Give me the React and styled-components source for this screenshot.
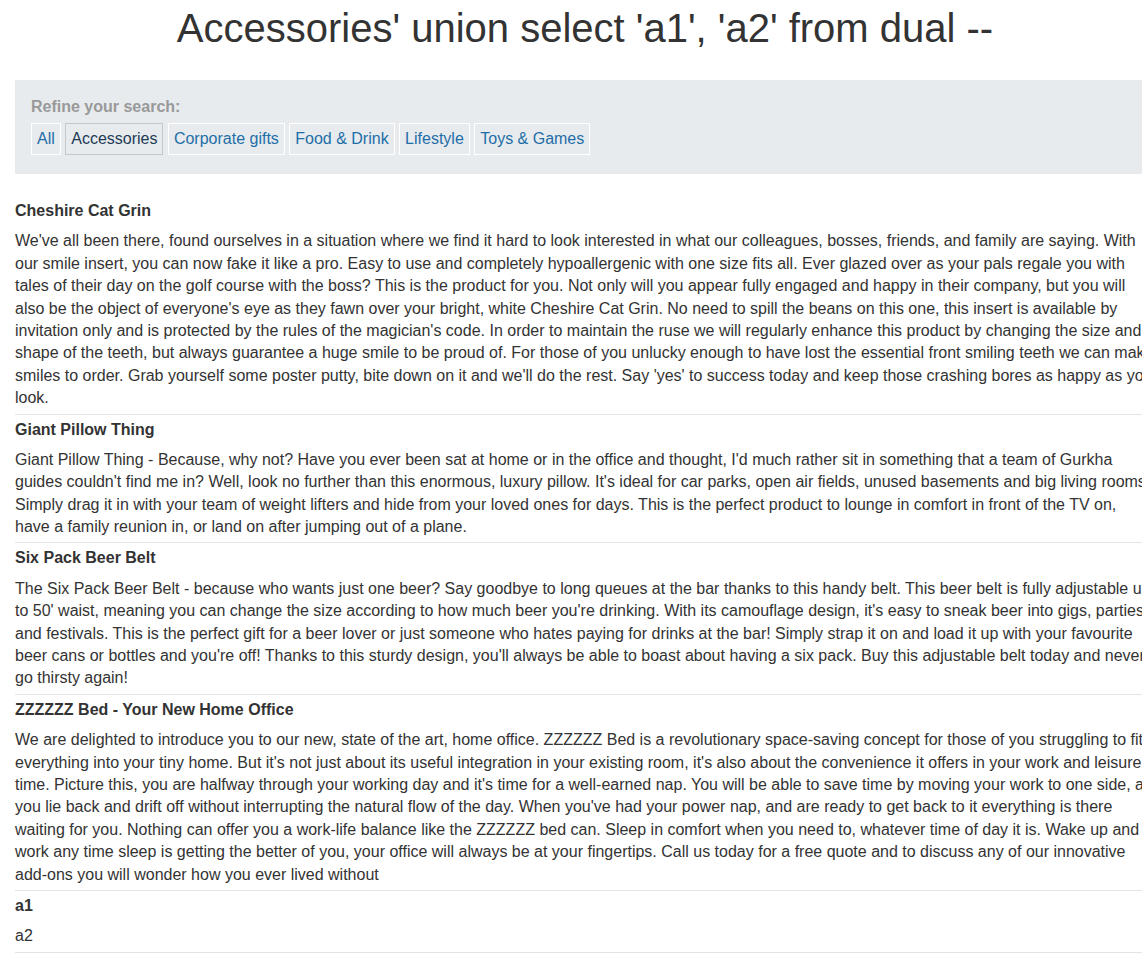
import React from "react";
import styled, { createGlobalStyle } from "styled-components";

const GlobalStyle = createGlobalStyle`
  html, body {
    margin: 0;
    padding: 0;
    overflow: hidden;
    background: #fff;
  }
  body {
    font-family: "Liberation Sans", Arial, sans-serif;
    font-size: 16px;
    line-height: 1.4;
    color: #333;
  }
`;

const Page = styled.div`
  padding: 4px 15px 0;
`;

const Container = styled.div`
  width: 1140px;
`;

const Title = styled.h1`
  margin: 0 0 28px;
  font-size: 40px;
  font-weight: normal;
  line-height: 48px;
  text-align: center;
  color: #333;
`;

const FilterBox = styled.section`
  background: #e7ebee;
  padding: 16px 16px 19px;
`;

const FilterLabel = styled.div`
  font-weight: bold;
  color: #999;
  line-height: 22px;
`;

const FilterList = styled.div`
  display: flex;
  gap: 4.45px;
  margin-top: 5px;
`;

const FilterButton = styled.a`
  display: block;
  padding: 4px 5px;
  line-height: 22px;
  border: 1px solid ${(props) => (props.$active ? "#c3c8cc" : "#fff")};
  color: ${(props) => (props.$active ? "#1d3b55" : "#1f6ea8")};
  text-decoration: none;
  cursor: pointer;
`;

const ProductTable = styled.table`
  width: 100%;
  margin-top: 22px;
  border-collapse: collapse;
  border-spacing: 0;
`;

const NameCell = styled.th`
  padding: 4px 0;
  text-align: left;
  font-weight: bold;
  color: #333;
`;

const DescCell = styled.td`
  padding: 4px 0;
  border-bottom: 1px solid #e4e4e4;
  color: #333;
`;

const categories = [
  "All",
  "Accessories",
  "Corporate gifts",
  "Food & Drink",
  "Lifestyle",
  "Toys & Games",
];

const products = [
  {
    name: "Cheshire Cat Grin",
    desc: "We've all been there, found ourselves in a situation where we find it hard to look interested in what our colleagues, bosses, friends, and family are saying. With our smile insert, you can now fake it like a pro. Easy to use and completely hypoallergenic with one size fits all. Ever glazed over as your pals regale you with tales of their day on the golf course with the boss? This is the product for you. Not only will you appear fully engaged and happy in their company, but you will also be the object of everyone's eye as they fawn over your bright, white Cheshire Cat Grin. No need to spill the beans on this one, this insert is available by invitation only and is protected by the rules of the magician's code. In order to maintain the ruse we will regularly enhance this product by changing the size and shape of the teeth, but always guarantee a huge smile to be proud of. For those of you unlucky enough to have lost the essential front smiling teeth we can make smiles to order. Grab yourself some poster putty, bite down on it and we'll do the rest. Say 'yes' to success today and keep those crashing bores as happy as you look.",
  },
  {
    name: "Giant Pillow Thing",
    desc: "Giant Pillow Thing - Because, why not? Have you ever been sat at home or in the office and thought, I'd much rather sit in something that a team of Gurkha guides couldn't find me in? Well, look no further than this enormous, luxury pillow. It's ideal for car parks, open air fields, unused basements and big living rooms. Simply drag it in with your team of weight lifters and hide from your loved ones for days. This is the perfect product to lounge in comfort in front of the TV on, have a family reunion in, or land on after jumping out of a plane.",
  },
  {
    name: "Six Pack Beer Belt",
    desc: "The Six Pack Beer Belt - because who wants just one beer? Say goodbye to long queues at the bar thanks to this handy belt. This beer belt is fully adjustable up to 50' waist, meaning you can change the size according to how much beer you're drinking. With its camouflage design, it's easy to sneak beer into gigs, parties and festivals. This is the perfect gift for a beer lover or just someone who hates paying for drinks at the bar! Simply strap it on and load it up with your favourite beer cans or bottles and you're off! Thanks to this sturdy design, you'll always be able to boast about having a six pack. Buy this adjustable belt today and never go thirsty again!",
  },
  {
    name: "ZZZZZZ Bed - Your New Home Office",
    desc: "We are delighted to introduce you to our new, state of the art, home office. ZZZZZZ Bed is a revolutionary space-saving concept for those of you struggling to fit everything into your tiny home. But it's not just about its useful integration in your existing room, it's also about the convenience it offers in your work and leisure time. Picture this, you are halfway through your working day and it's time for a well-earned nap. You will be able to save time by moving your work to one side, as you lie back and drift off without interrupting the natural flow of the day. When you've had your power nap, and are ready to get back to it everything is there waiting for you. Nothing can offer you a work-life balance like the ZZZZZZ bed can. Sleep in comfort when you need to, whatever time of day it is. Wake up and work any time sleep is getting the better of you, your office will always be at your fingertips. Call us today for a free quote and to discuss any of our innovative add-ons you will wonder how you ever lived without",
  },
  { name: "a1", desc: "a2" },
];

const App = () => {
  return (
    <>
      <GlobalStyle />
      <Page>
        <Container>
          <Title>Accessories' union select 'a1', 'a2' from dual --</Title>
          <FilterBox>
            <FilterLabel>Refine your search:</FilterLabel>
            <FilterList>
              {categories.map((c) => (
                <FilterButton key={c} $active={c === "Accessories"}>
                  {c}
                </FilterButton>
              ))}
            </FilterList>
          </FilterBox>
          <ProductTable>
            <tbody>
              {products.map((p) => (
                <React.Fragment key={p.name}>
                  <tr>
                    <NameCell>{p.name}</NameCell>
                  </tr>
                  <tr>
                    <DescCell>{p.desc}</DescCell>
                  </tr>
                </React.Fragment>
              ))}
            </tbody>
          </ProductTable>
        </Container>
      </Page>
    </>
  );
};

export default App;
